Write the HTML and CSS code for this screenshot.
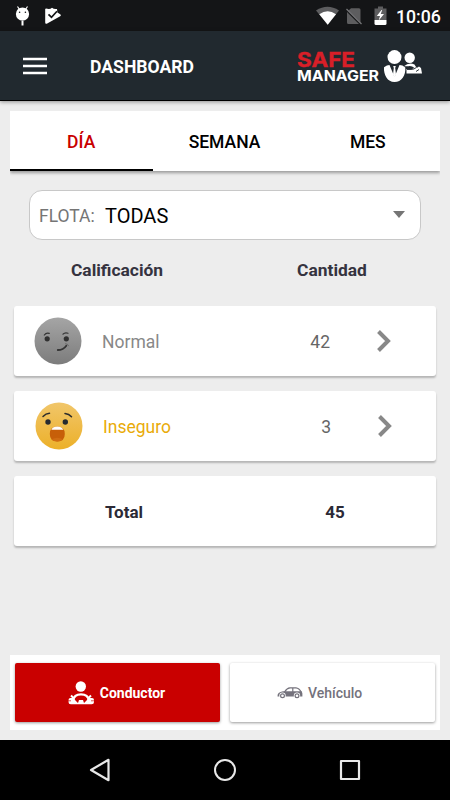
FILE: index.html
```html
<!DOCTYPE html>
<html lang="es">
<head>
    <meta charset="UTF-8">
    <meta name="viewport" content="width=device-width, initial-scale=1.0">
    <title>Safe Manager</title>
    <link rel="stylesheet" href="styles.css">
</head>
<body>
    <div class="status-bar">
        <svg class="status-left" width="48" height="31" viewBox="0 0 48 31">
            <!-- android head -->
            <path d="M2.5 6.5l2 3M12.5 6.5l-2 3" stroke="#fff" stroke-width="1.2"/>
            <circle cx="7.5" cy="14" r="6.6" fill="#fff"/>
            <circle cx="4.6" cy="12.2" r=".8" fill="#141517"/>
            <circle cx="10.4" cy="12.2" r=".8" fill="#141517"/>
            <path d="M7.5 20.5v5" stroke="#fff" stroke-width="2"/>
            <!-- play protect -->
            <path d="M31 8.5q4 1.2 6-.8q2 1.8 5 1.2l.4 3.6l2.8 1.8q1.5 1 0 2L32.2 23.5q-2 1-2-1V9z" fill="#fff"/>
            <path d="M33.5 14.3l3 3l5.5-6" fill="none" stroke="#141517" stroke-width="1.7"/>
        </svg>
        <svg class="status-right" width="72" height="31" viewBox="0 0 72 31">
            <path d="M0 10.5Q11.500 3 23 10.500L11.700 24.700z" fill="#5d5d5f"/>
            <path d="M3.300 14.200Q11.700 8.500 20 14.200L11.700 24.700z" fill="#fff"/>
            <path d="M35 8.300h8q1.500 0 1.500 1.500v12.500L32.500 10.500zM31 12l12 12H32.500q-1.500 0-1.500-1.500z" fill="#5d5d5f"/>
            <path d="M30.500 9l15 15" stroke="#77777a" stroke-width="1.300"/>
            <path d="M58.500 8.500h3.500v-2h5v2H70.500V20H58.500z" fill="#5d5d5f"/>
            <path d="M58.500 20h12v3.500q0 1.500-1.500 1.500h-9q-1.500 0-1.500-1.500z" fill="#fff"/>
            <path d="M65.500 10l-4.700 6h3.200l-1.300 4.500l5.300-6.500h-3.300l1.500-4z" fill="#fff"/>
        </svg>
        <span class="clock">10:06</span>
    </div>

    <header class="header">
        <svg class="menu-icon" width="24" height="18" viewBox="0 0 24 18">
            <path d="M0 1.900h24M0 9h24M0 16.100h24" stroke="#fff" stroke-width="2.500"/>
        </svg>
        <h1 class="title">DASHBOARD</h1>
        <svg class="logo" width="128" height="46" viewBox="0 -6 128 46">
            <text class="logo-safe" x="0" y="17.500" textLength="58" lengthAdjust="spacingAndGlyphs">SAFE</text>
            <text class="logo-manager" x="0" y="31.800" textLength="82" lengthAdjust="spacingAndGlyphs">MANAGER</text>
            <g fill="#fff">
                <circle cx="97.500" cy="8.100" r="7"/>
                <path d="M87 18.200q3-2.200 5.500-2.200l5 12l5-12q3 0 5.800 2.400C109 26 104.500 33 97.500 33S86.500 26 87 18.200z"/>
                <path d="M96.200 17h2.600l-.6 2l.8 6.500l-1.500 3l-1.500-3l.8-6.500z"/>
                <circle cx="112.700" cy="8.700" r="5.200"/>
                <path d="M107 17.200Q112 12.700 117.500 15.500l2.200 3.500l2.300-1.500l2 1.500l1 5.500h-15.500v-4.500l5 .3l3-1.300q-3-2.500-6-1.800z"/>
            </g>
            <path d="M110 20.500h4q3 0 5-1.800M119 22.500l3-2" fill="none" stroke="#21292f" stroke-width=".9"/>
        </svg>
    </header>

    <main class="content">
        <nav class="tabs">
            <a class="tab active">DÍA</a>
            <a class="tab">SEMANA</a>
            <a class="tab">MES</a>
        </nav>

        <div class="fleet-select">
            <span class="fleet-label">FLOTA:</span>
            <span class="fleet-value">TODAS</span>
            <svg width="12" height="7" viewBox="0 0 12 7"><path d="M0 0h12L6 7z" fill="#757575"/></svg>
        </div>

        <div class="list-head">
            <span>Calificación</span>
            <span>Cantidad</span>
        </div>

        <div class="list">
            <div class="card">
                <svg width="48" height="48" viewBox="0 0 48 48">
                    <defs>
                        <linearGradient id="gray" x1="0" y1="0" x2="0" y2="1">
                            <stop offset="0" stop-color="#a5a5a5"/>
                            <stop offset="1" stop-color="#7c7c7c"/>
                        </linearGradient>
                    </defs>
                    <circle cx="24" cy="24" r="23.500" fill="url(#gray)"/>
                    <g fill="none" stroke="#343434" stroke-linecap="round">
                        <path d="M10.300 18q2-2.700 5-1.600M29 17.200q2-2.200 5-1" stroke-width="1.200"/>
                        <path d="M23.800 33q5.500 0 8.500-4.300" stroke-width="1.800"/>
                        <path d="M31.500 26.700q2.500 0 3 2" stroke="#666" stroke-width="1"/>
                    </g>
                    <circle cx="13.200" cy="21.800" r="2.600" fill="#303030"/>
                    <circle cx="32.300" cy="21.800" r="2.600" fill="#303030"/>
                </svg>
                <span class="name">Normal</span>
                <span class="count">42</span>
                <svg class="chevron" width="14" height="22" viewBox="0 0 14 22"><path d="M1.500 1.500L11 11l-9.500 9.500" fill="none" stroke="#888" stroke-width="4"/></svg>
            </div>
            <div class="card unsafe">
                <svg width="48" height="48" viewBox="0 0 48 48">
                    <defs>
                        <linearGradient id="yellow" x1="0" y1="0" x2="0" y2="1">
                            <stop offset="0" stop-color="#f1c66a"/>
                            <stop offset="1" stop-color="#ecb029"/>
                        </linearGradient>
                    </defs>
                    <circle cx="24" cy="24" r="23.500" fill="url(#yellow)"/>
                    <path d="M8 14.500q2.800-3 6.500-3.200M30 11.500q4 .4 6.500 3.300" fill="none" stroke="#2b2b2b" stroke-width="1.500" stroke-linecap="round"/>
                    <circle cx="13" cy="20" r="2.700" fill="#262a30"/>
                    <circle cx="30.300" cy="20" r="2.700" fill="#262a30"/>
                    <path d="M14.800 32q0-7.500 7.500-7.500t7.500 7.500t-7.500 7.500t-7.500-7.500z" fill="#c75f09"/>
                    <path d="M16.300 27.800Q18 24.500 22.300 24.500t6 3.300z" fill="#fff"/>
                    <path d="M16.700 37.200q5.600-3 11.200 0q-2 2.300-5.600 2.300t-5.600-2.300z" fill="#d06c12"/>
                </svg>
                <span class="name">Inseguro</span>
                <span class="count">3</span>
                <svg class="chevron" width="14" height="22" viewBox="0 0 14 22"><path d="M1.500 1.500L11 11l-9.500 9.500" fill="none" stroke="#888" stroke-width="4"/></svg>
            </div>
            <div class="card total">
                <span>Total</span>
                <span>45</span>
            </div>
        </div>

        <div class="switch">
            <button class="switch-btn selected">
                <svg width="26" height="24" viewBox="0 0 26 24">
                    <circle cx="12.800" cy="5.500" r="5.200" fill="#fff"/>
                    <path d="M5 19.500Q6 13.300 13 13.300t8 6.200" fill="none" stroke="#fff" stroke-width="2.300"/>
                    <path d="M3 14.500l2.500 2.500M23 14.500L20.500 17" stroke="#fff" stroke-width="2"/>
                    <path d="M.500 19q0-2 2-2h3.500l1 2l3 3l1-3h4l1 3l3-3l1-2H24q2 0 2 2v2q0 2.300-2.300 2.300H2.800Q.500 23.300.500 21z" fill="#fff"/>
                    <path d="M0 19.800h3M23 19.800h3" stroke="#c90000" stroke-width=".7"/>
                </svg>
                Conductor
            </button>
            <button class="switch-btn vehicle">
                <svg width="26" height="12" viewBox="0 0 26 12">
                    <path d="M7.500 5Q10 1 13 .8h6q3 .2 5.300 4.400M15.800.8v4.500" fill="none" stroke="#74727c" stroke-width="1.200"/>
                    <path d="M.500 9.500Q0 5.200 6 4.300h18.500q1.500 1.500.9 5.200H.500z" fill="#74727c"/>
                    <circle cx="5.500" cy="8.700" r="3.200" fill="#fff"/>
                    <circle cx="20" cy="8.700" r="3.200" fill="#fff"/>
                    <circle cx="5.500" cy="8.800" r="1.900" fill="none" stroke="#74727c" stroke-width="1.200"/>
                    <circle cx="20" cy="8.800" r="1.900" fill="none" stroke="#74727c" stroke-width="1.200"/>
                </svg>
                Vehículo
            </button>
        </div>
    </main>

    <div class="nav-bar">
        <svg width="22" height="24" viewBox="0 0 22 24"><path d="M19.500 1.800v20.400L2 12z" fill="none" stroke="#e8e8e8" stroke-width="2.200" stroke-linejoin="round"/></svg>
        <svg width="22" height="24" viewBox="0 0 22 24"><circle cx="11" cy="12" r="10" fill="none" stroke="#e8e8e8" stroke-width="2"/></svg>
        <svg width="22" height="24" viewBox="0 0 22 24"><rect x="2" y="3" width="18" height="18" fill="none" stroke="#e8e8e8" stroke-width="2.200" stroke-linejoin="round"/></svg>
    </div>
</body>
</html>
```
FILE: styles.css
```css
* {
    box-sizing: border-box;
}

body {
    font-family: Roboto, sans-serif;
    margin: 0;
    height: 800px;
    background: #ededed;
    color: #000;
    display: flex;
    flex-direction: column;
    overflow: hidden;
}

svg {
    display: block;
    flex: none;
}

.status-bar {
    height: 31px;
    background: #141517;
    color: #fff;
    display: flex;
    align-items: center;
    padding: 2px 10px 0 15px;
}

.status-left,
.status-right {
    margin-top: -2px;
}

.status-right {
    margin-left: auto;
}

.clock {
    width: 44px;
    margin-left: 8px;
    font-size: 17.7px;
    font-weight: 500;
    text-align: right;
    white-space: nowrap;
}

.header {
    height: 70px;
    background: #21292f;
    border-bottom: 1px solid #000;
    box-shadow: 0 1px 4px rgba(0, 0, 0, 0.4);
    display: flex;
    align-items: center;
    padding: 0 25px 0 23px;
}

.title {
    margin: 2px 0 0 43px;
    color: #fff;
    font-size: 17.6px;
    font-weight: 700;
}

.logo {
    margin-left: auto;
}

.logo-safe,
.logo-manager {
    font-family: Inter, sans-serif;
}

.logo-safe {
    font-size: 20.5px;
    font-weight: 700;
    fill: #d91f28;
    stroke: #d91f28;
    stroke-width: 0.4px;
}

.logo-manager {
    font-size: 15px;
    font-weight: 700;
    fill: #fff;
}

.content {
    flex: 1;
    display: flex;
    flex-direction: column;
    padding: 10px 10px;
}

.tabs {
    height: 60px;
    background: #fff;
    box-shadow: 0 2px 3px rgba(0, 0, 0, 0.35);
    clip-path: inset(0 0 -8px 0);
    display: grid;
    grid-template-columns: repeat(3, 1fr);
}

.tab {
    display: flex;
    align-items: center;
    justify-content: center;
    padding: 4px 1px 0 0;
    border-bottom: 2px solid transparent;
    font-size: 17.5px;
    font-weight: 500;
}

.tab.active {
    color: #c90000;
    border-bottom-color: #000;
}

.fleet-select {
    height: 50px;
    margin: 19px 19px 0;
    padding: 0 15px 0 9px;
    background: #fff;
    border: 1px solid #c8c8c8;
    border-radius: 13px;
    display: flex;
    align-items: center;
}

.fleet-select svg {
    margin: -2px 0 0;
}

.fleet-label {
    width: 66px;
    padding-top: 2px;
    color: #757575;
    font-size: 17.5px;
}

.fleet-value {
    flex: 1;
    padding-top: 1px;
    font-size: 20px;
}

.list-head {
    height: 66px;
    padding: 20px 0 0;
    display: grid;
    grid-template-columns: 214px 216px;
    text-align: center;
    color: #35333f;
    font-size: 17.4px;
    font-weight: 700;
}

.list {
    display: flex;
    flex-direction: column;
    gap: 15px;
    padding: 0 4px;
}

.card {
    height: 70px;
    background: #fff;
    border-radius: 3px;
    box-shadow: 0 2px 2px rgba(0, 0, 0, 0.24);
    display: grid;
    grid-template-columns: 48px 160px 48px 14px;
    align-items: center;
    padding-left: 20px;
    column-gap: 20px;
    font-size: 17.5px;
}

.name {
    color: #888;
    padding-top: 2px;
}

.count {
    color: #666;
    padding-top: 2px;
    text-align: right;
}

.chevron {
    margin-left: 27px;
}

.unsafe {
    padding-left: 21px;
}

.unsafe .name {
    color: #e9ab09;
}

.card.total {
    grid-template-columns: 220px 202px;
    column-gap: 0;
    padding: 2px 0 0;
    text-align: center;
    color: #2c2a36;
    font-size: 17px;
    font-weight: 700;
}

.switch {
    height: 75px;
    margin-top: auto;
    padding: 8px 5px;
    background: #fff;
    display: grid;
    grid-template-columns: 1fr 1fr;
    gap: 10px;
}

.switch-btn {
    height: 59px;
    border: none;
    border-radius: 2px;
    background: #fff;
    box-shadow: 0 1px 3px rgba(0, 0, 0, 0.4);
    color: #74727c;
    font-family: inherit;
    font-size: 14px;
    font-weight: 700;
    display: flex;
    align-items: center;
    justify-content: center;
    gap: 6px;
    padding: 0 8px 0 6px;
}

.switch-btn.selected {
    background: #c90000;
    color: #fff;
}

.switch-btn.vehicle {
    justify-content: flex-start;
    padding-left: 47px;
    gap: 5px;
    font-weight: 500;
}

.nav-bar {
    height: 60px;
    background: #000;
    display: flex;
    align-items: center;
    justify-content: center;
    gap: 103px;
}
```
